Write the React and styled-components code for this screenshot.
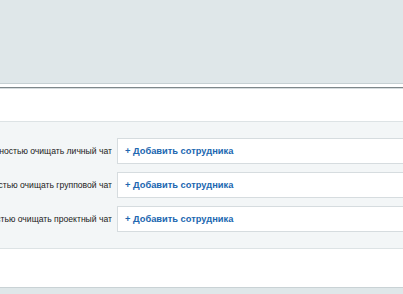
import styled, { createGlobalStyle } from "styled-components";

const GlobalStyle = createGlobalStyle`
  html, body {
    margin: 0;
    padding: 0;
    background: #ffffff;
    overflow: hidden;
  }
`;

const Page = styled.div`
  width: 403px;
  height: 294px;
  display: flex;
  flex-direction: column;
  font-family: "Liberation Sans", Arial, sans-serif;
`;

const Header = styled.div`
  height: 83px;
  flex: none;
  background-color: #dfe7e9;
  border-bottom: 1px solid #c6d0d3;
`;

const HeaderRule = styled.div`
  height: 1px;
  flex: none;
  margin-top: 3px;
  background-color: #7d878a;
  box-shadow: 0 1px 0 #d6dcde;
`;

const Spacer = styled.div`
  height: ${(p) => p.$h}px;
  flex: none;
`;

const Panel = styled.div`
  flex: none;
  display: flex;
  flex-direction: column;
  gap: 8px;
  padding: 16px 0 16px;
  background-color: #f3f6f7;
  border-top: 1px solid #dde3e5;
  border-bottom: 1px solid #dde3e5;
`;

const Row = styled.div`
  display: flex;
  align-items: center;
  gap: 5px;
  height: 26px;
`;

const Label = styled.div`
  flex: 0 0 112px;
  display: flex;
  justify-content: flex-end;
  overflow: hidden;
  white-space: nowrap;
  font-size: 8.6px;
  color: #222222;
`;

const Field = styled.div`
  flex: 1;
  height: 24px;
  display: flex;
  align-items: center;
  padding-left: 7px;
  margin-right: -2px;
  background-color: #ffffff;
  border: 1px solid #d6dcdf;
`;

const AddLink = styled.span`
  font-size: 9.3px;
  font-weight: bold;
  color: #2067b0;
  white-space: nowrap;
`;

const Footer = styled.div`
  flex: 1;
  background-color: #dfe7e9;
  border-top: 1px solid #c9d2d5;
`;

const rows = [
  "Разрешить полностью очищать личный чат",
  "Разрешить полностью очищать групповой чат",
  "Разрешить полностью очищать проектный чат"
];

const App = () => (
  <>
    <GlobalStyle />
    <Page>
      <Header />
      <HeaderRule />
      <Spacer $h={33} />
      <Panel>
        {rows.map((label) => (
          <Row key={label}>
            <Label>
              <span>{label}</span>
            </Label>
            <Field>
              <AddLink>+ Добавить сотрудника</AddLink>
            </Field>
          </Row>
        ))}
      </Panel>
      <Spacer $h={38} />
      <Footer />
    </Page>
  </>
);

export default App;
